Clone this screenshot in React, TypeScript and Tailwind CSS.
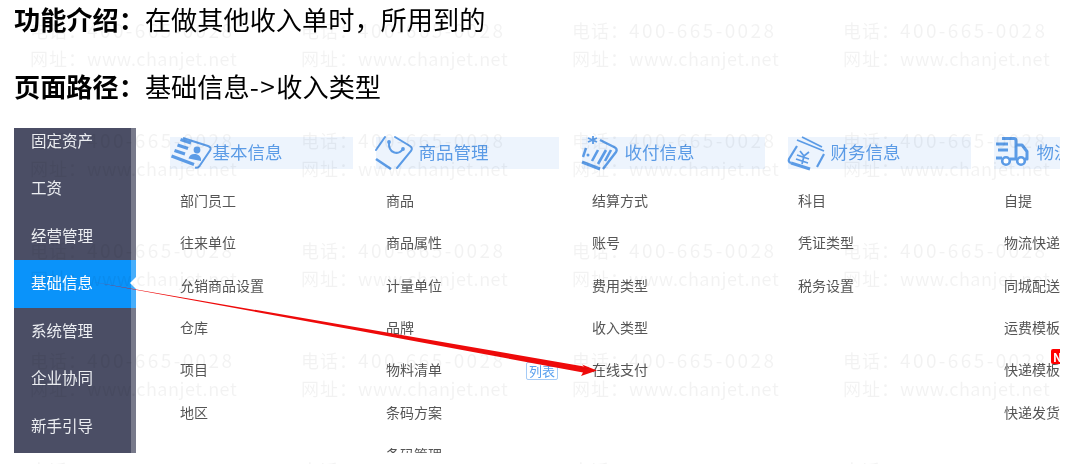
const columns = [
  {
    title: "基本信息",
    icon: "card",
    items: ["部门员工", "往来单位", "允销商品设置", "仓库", "项目", "地区"],
  },
  {
    title: "商品管理",
    icon: "bag",
    items: ["商品", "商品属性", "计量单位", "品牌", "物料清单", "条码方案", "条码管理"],
  },
  {
    title: "收付信息",
    icon: "receipt",
    items: ["结算方式", "账号", "费用类型", "收入类型", "在线支付"],
  },
  {
    title: "财务信息",
    icon: "finance",
    items: ["科目", "凭证类型", "税务设置"],
  },
  {
    title: "物流信息",
    icon: "truck",
    items: ["自提", "物流快递", "同城配送", "运费模板", "快递模板", "快递发货"],
  },
];

const navItems = ["固定资产", "工资", "经营管理", "基础信息", "系统管理", "企业协同", "新手引导"];

function HeaderIcon({ name }: { name: string }) {
  const blue = "#5b9be6";
  return (
    <svg width="42" height="36" viewBox="0 0 42 36" className="shrink-0 overflow-visible" fill="none">
      {name === "card" && (
        <g>
          <path d="M13 3L38 11Q42 12.500 40 15.500L29.500 31Q28 33.500 25 32.500" stroke={blue} strokeWidth="2" />
          <path d="M10.500 4.500L21 8M7.500 10L18 13.500M4.500 15.500L15 19M1.500 21L24 29.500" stroke={blue} strokeWidth="3.200" />
          <circle cx="27" cy="15" r="3.400" fill={blue} />
          <path d="M18.500 23.500c1-4 4-5 7-4.500s6 2.500 5.500 7z" fill={blue} />
        </g>
      )}
      {name === "bag" && (
        <g>
          <path d="M0 15L9 2" stroke={blue} strokeWidth="2" strokeLinecap="round" />
          <path d="M19 2L34 11Q37 13 35 16L21 33" stroke={blue} strokeWidth="2" strokeLinecap="round" />
          <path d="M0 24L15 34" stroke={blue} strokeWidth="2.600" />
          <path d="M13 7C12 18 22 21 27 14" stroke={blue} strokeWidth="2" />
          <circle cx="13" cy="7" r="1.900" fill={blue} />
          <circle cx="27" cy="14" r="1.900" fill={blue} />
        </g>
      )}
      {name === "receipt" && (
        <g>
          <path d="M11 1v8M6 3l9 4M6 7l9-4" stroke={blue} strokeWidth="1.800" />
          <path d="M18 5L32 12Q36 14 34 17L21 34" stroke={blue} strokeWidth="2.400" />
          <path d="M4 13L1 22" stroke={blue} strokeWidth="2.400" />
          <path d="M0 27L18 34" stroke={blue} strokeWidth="3" />
          <path d="M10 26L16 15M16 29L24 15M23 26L29 15" stroke={blue} strokeWidth="2.600" />
          <circle cx="6" cy="20" r="1.500" fill={blue} />
        </g>
      )}
      {name === "finance" && (
        <g>
          <path d="M14 2L34 12M9 5L36 16" stroke={blue} strokeWidth="1.800" />
          <path d="M9 11L1 24Q0 27 3 28" stroke={blue} strokeWidth="2.200" />
          <path d="M3 28L22 34" stroke={blue} strokeWidth="3" />
          <path d="M36 19L29 32" stroke={blue} strokeWidth="2.200" />
          <path d="M12 16L16 21L21 17M16 21L14 29M9 20L21 24M8 24L20 28" stroke={blue} strokeWidth="1.700" />
        </g>
      )}
      {name === "truck" && (
        <g>
          <path d="M8 3.500H20Q22 3.500 22 6V24H16" stroke={blue} strokeWidth="3" />
          <path d="M22 10H28L33 16.500V24H31" stroke={blue} strokeWidth="3" strokeLinejoin="round" />
          <path d="M2 9H14M4 15H14M2 23H8" stroke={blue} strokeWidth="3" />
          <circle cx="12" cy="26" r="3.800" stroke={blue} strokeWidth="2.600" fill="white" />
          <circle cx="27" cy="26" r="3.800" stroke={blue} strokeWidth="2.600" fill="white" />
        </g>
      )}
    </svg>
  );
}

function Watermark() {
  const cols = [0, 1, 2, 3];
  const rows = [0, 1, 2, 3, 4];
  return (
    <div className="absolute inset-0 pointer-events-none overflow-hidden pl-[30px] pt-[16px] grid grid-cols-[271px_271px_271px_271px] auto-rows-[110px] text-[18px] tracking-[1px] text-black/[0.05]">
      {rows.map((r) =>
        cols.map((c) => (
          <div key={`${r}-${c}`} className="whitespace-nowrap leading-[28px]">
            <div>
              电话：<span className="text-[19px] tracking-[2.4px]">400-665-0028</span>
            </div>
            <div>
              网址：<span className="tracking-[0.5px]">www.chanjet.net</span>
            </div>
          </div>
        ))
      )}
    </div>
  );
}

export default function App() {
  return (
    <div className="relative w-[1073px] h-[464px] overflow-hidden bg-white blur-[0.4px] font-['Noto_Sans_CJK_SC',sans-serif]">
      <div className="-mt-[2px] pl-[14px] text-[26.2px] leading-[42px] text-black">
        <p>
          <b>功能介绍：</b>在做其他收入单时，所用到的
        </p>
        <p className="mt-[25px]">
          <b>页面路径：</b>基础信息<span className="tracking-[1.5px]">-&gt;</span>收入类型
        </p>
      </div>

      <div className="ml-[14px] mt-[21px] w-[1046px] h-[325px] flex overflow-hidden">
        <div className="relative w-[122px] shrink-0 overflow-hidden bg-[#4b4e65]">
          <div className="-mt-[10.5px]">
            {navItems.map((n) => (
              <div
                key={n}
                className={
                  n === "基础信息"
                    ? "h-[47.5px] flex items-center pl-[17px] pb-[2px] text-[15.5px] text-white bg-[#0a93fa]"
                    : "h-[47.5px] flex items-center pl-[17px] pb-[2px] text-[15.5px] text-[#eceef2]"
                }
              >
                {n}
              </div>
            ))}
          </div>
          {/* scrollbar strip */}
          <div className="absolute top-0 bottom-0 right-0 w-[5px] bg-white/25" />
          <div className="absolute right-0 top-[149px] w-0 h-0 border-y-[6px] border-y-transparent border-r-[6px] border-r-white" />
        </div>

        <div className="flex pl-[34px] pt-[9px] text-[14px] text-[#555]">
          {columns.map((col) => (
            <div key={col.title} className="w-[183px] mr-[23px] shrink-0">
              <div className="h-[32px] flex items-center gap-[0.5px] bg-[#edf4fd] text-[17.5px] text-[#5b9be6] whitespace-nowrap">
                <HeaderIcon name={col.icon} />
                <span className="pb-[2px]">{col.title}</span>
              </div>
              <div className="mt-[11.5px]">
                {col.items.map((item) => (
                  <div key={item} className="relative h-[42.3px] flex items-center pl-[10px] pb-[2px]">
                    {item}
                    {item === "物料清单" && (
                      <span className="absolute right-[1px] top-[12px] h-[18px] w-[32px] flex items-center justify-center rounded-[2px] border border-[#a5cbf6] text-[13px] text-[#5aa0ee]">
                        列表
                      </span>
                    )}
                    {item === "快递模板" && (
                      <span className="absolute left-[57px] -top-[1px] w-[16px] h-[15px] rounded-[2px] bg-[#f00] pl-[2px] text-[12px] leading-[15px] font-bold text-white">
                        N
                      </span>
                    )}
                  </div>
                ))}
              </div>
            </div>
          ))}
        </div>
      </div>

      {/* annotation arrow */}
      <svg className="absolute inset-0 pointer-events-none" width="1073" height="464" viewBox="0 0 1073 464">
        <polygon
          points="93,282 584,366.5 582,364.5 597,370.5 581,376 583,372.5 360,331"
          fill="#ee0a0a"
        />
      </svg>

      <Watermark />
    </div>
  );
}
